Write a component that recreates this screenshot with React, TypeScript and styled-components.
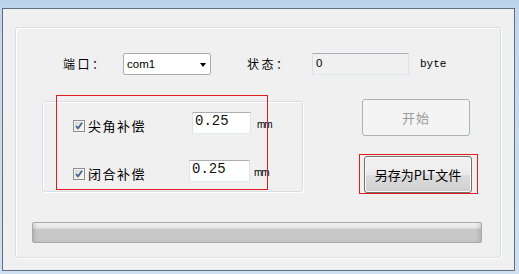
import styled, { createGlobalStyle } from "styled-components";

const Global = createGlobalStyle`
  html, body {
    margin: 0;
    padding: 0;
  }
  body {
    width: 519px;
    height: 274px;
    overflow: hidden;
    background: #c4d8ee;
    font-family: "Noto Sans CJK SC", "Liberation Sans", sans-serif;
  }
`;

const Frame = styled.div`
  width: 519px;
  height: 274px;
  box-sizing: border-box;
  padding: 8px 4px 3px 2px;
  background: linear-gradient(to bottom, #b9d1ea 0px, #c2d7ed 12px, #cfe0f2 100%);
`;

const Client = styled.div`
  height: 100%;
  box-sizing: border-box;
  border: 1px solid #5f6f81;
  background: #f0f0f0;
  padding: 18px 13px 12px 12px;
`;

const GroupBox = styled.div`
  height: 100%;
  box-sizing: border-box;
  border: 1px solid #d5dfe5;
  border-radius: 3px;
  box-shadow: inset 1px 1px 0 #ffffff, 1px 1px 0 #ffffff;
  padding-top: 25px;
  display: flex;
  flex-direction: column;
`;

const TopRow = styled.div`
  display: flex;
  align-items: center;
  height: 22px;
  margin-left: 47px;
`;

const Label = styled.span<{ $width: number }>`
  width: ${(p) => p.$width}px;
  font-size: 12px;
  letter-spacing: 2.5px;
  color: #000;
  line-height: 22px;
`;

const Combo = styled.div`
  width: 88px;
  height: 22px;
  box-sizing: border-box;
  border: 1px solid #abadb3;
  border-radius: 2px;
  background: #fff;
  display: flex;
  align-items: center;
  justify-content: space-between;
  padding: 0 4px 0 3px;
  margin-right: 36px;
  font-family: "Liberation Sans", sans-serif;
  font-size: 11.5px;
  color: #000;
`;

const Arrow = styled.span`
  width: 0;
  height: 0;
  border-left: 3.5px solid transparent;
  border-right: 3.5px solid transparent;
  border-top: 4px solid #000;
  margin-top: 1px;
`;

const StatusBox = styled.div`
  width: 97px;
  height: 22px;
  box-sizing: border-box;
  border: 1px solid #abadb3;
  border-left-color: #dbdfe6;
  border-right-color: #dbdfe6;
  border-bottom-color: #e3e9ef;
  background: #f0f0f0;
  padding: 2px 0 0 3px;
  font-family: "Liberation Sans", sans-serif;
  font-size: 11.5px;
  line-height: 14px;
  color: #000;
`;

const Unit = styled.span<{ $gap: number }>`
  margin-left: ${(p) => p.$gap}px;
  font-family: "Liberation Mono", monospace;
  font-size: 11px;
  color: #000;
`;

const MiddleRow = styled.div`
  display: flex;
  margin-top: 24px;
`;

const InnerGroup = styled.div`
  position: relative;
  width: 261px;
  height: 91px;
  box-sizing: border-box;
  margin: 2px 0 0 26px;
  border: 1px solid #d5dfe5;
  border-radius: 3px;
  box-shadow: inset 1px 1px 0 #ffffff, 1px 1px 0 #ffffff;
  padding: 10px 0 0 30px;
  display: flex;
  flex-direction: column;
  gap: 26px;
`;

const Marker = styled.div<{ $l: number; $t: number; $w: number; $h: number }>`
  position: absolute;
  left: ${(p) => p.$l}px;
  top: ${(p) => p.$t}px;
  width: ${(p) => p.$w}px;
  height: ${(p) => p.$h}px;
  box-sizing: border-box;
  border: 1px solid #e01c1c;
  pointer-events: none;
`;

const CheckRow = styled.div`
  display: flex;
  align-items: center;
  height: 22px;
`;

const CheckItem = styled.label<{ $width: number }>`
  width: ${(p) => p.$width}px;
  display: flex;
  align-items: center;
  gap: 3px;
  margin-top: 6px;
  font-size: 13px;
  letter-spacing: 1.5px;
  color: #000;
  line-height: 16px;
`;

const ValueBox = styled.div<{ $width: number }>`
  width: ${(p) => p.$width}px;
  height: 22px;
  box-sizing: border-box;
  border: 1px solid #abadb3;
  border-left-color: #e2e3ea;
  border-right-color: #e2e3ea;
  border-bottom-color: #e3e9ef;
  background: #fff;
  padding: 1px 0 0 2px;
  font-family: "Liberation Mono", monospace;
  font-size: 14px;
  line-height: 15px;
  color: #111;
`;

const Mm = styled.span<{ $gap: number }>`
  margin-left: ${(p) => p.$gap}px;
  margin-top: 3px;
  font-family: "Liberation Sans", sans-serif;
  font-size: 10px;
  letter-spacing: -1px;
  color: #000;
`;

const ButtonColumn = styled.div`
  display: flex;
  flex-direction: column;
  align-items: flex-start;
  gap: 20px;
  margin-left: 59px;
`;

const Highlight = styled.div`
  position: relative;
  margin-left: 2px;
`;

const Button = styled.button<{ $disabled?: boolean }>`
  width: 108px;
  height: 37px;
  box-sizing: border-box;
  border-radius: 3px;
  font-family: "Noto Sans CJK SC", "Liberation Sans", sans-serif;
  font-size: 13px;
  padding: 0;
  border: 1px solid ${(p) => (p.$disabled ? "#adb2b5" : "#707070")};
  color: ${(p) => (p.$disabled ? "#9a9a9a" : "#000")};
  letter-spacing: ${(p) => (p.$disabled ? "1px" : "0")};
  background: ${(p) =>
    p.$disabled
      ? "#f4f4f4"
      : "linear-gradient(to bottom, #f2f2f2 0%, #ebebeb 50%, #dddddd 51%, #cfcfcf 100%)"};
  box-shadow: ${(p) => (p.$disabled ? "none" : "inset 0 0 0 1px #fbfbfb")};
`;

const Progress = styled.div`
  width: 450px;
  height: 21px;
  box-sizing: border-box;
  margin: 29px 0 0 16px;
  border: 1px solid #a9a9a9;
  border-radius: 2px;
  background: linear-gradient(to bottom, #f2f2f2 0px, #e4e4e4 5px, #cacaca 6px, #c6c6c6 100%);
  box-shadow: inset 5px 0 4px -3px rgba(0, 0, 0, 0.12), inset -5px 0 4px -3px rgba(0, 0, 0, 0.12);
`;

const Check = () => (
  <svg width="12" height="12" viewBox="0 0 12 12">
    <defs>
      <linearGradient id="cb" x1="0" y1="0" x2="1" y2="1">
        <stop offset="0" stopColor="#d6d6d6" />
        <stop offset="1" stopColor="#f8f8f8" />
      </linearGradient>
    </defs>
    <rect x="0.5" y="0.5" width="11" height="11" fill="#f4f4f4" stroke="#8e8f8f" />
    <rect x="2" y="2" width="8" height="8" fill="url(#cb)" />
    <path d="M3 6 L5 8.5 L9 2.8" fill="none" stroke="#3d5c8c" strokeWidth="1.6" />
  </svg>
);

const App = () => {
  return (
    <>
      <Global />
      <Frame>
        <Client>
          <GroupBox>
            <TopRow>
              <Label $width={60}>端口：</Label>
              <Combo>
                <span>com1</span>
                <Arrow />
              </Combo>
              <Label $width={65}>状态：</Label>
              <StatusBox>0</StatusBox>
              <Unit $gap={11}>byte</Unit>
            </TopRow>
            <MiddleRow>
              <InnerGroup>
                <CheckRow>
                  <CheckItem $width={119}>
                    <Check />
                    尖角补偿
                  </CheckItem>
                  <ValueBox $width={59}>0.25</ValueBox>
                  <Mm $gap={6}>mm</Mm>
                </CheckRow>
                <CheckRow>
                  <CheckItem $width={116}>
                    <Check />
                    闭合补偿
                  </CheckItem>
                  <ValueBox $width={61}>0.25</ValueBox>
                  <Mm $gap={4}>mm</Mm>
                </CheckRow>
                <Marker $l={13} $t={-7} $w={212} $h={95} />
              </InnerGroup>
              <ButtonColumn>
                <Button $disabled disabled>
                  开始
                </Button>
                <Highlight>
                  <Button>另存为PLT文件</Button>
                  <Marker $l={-5} $t={-2} $w={119} $h={40} />
                </Highlight>
              </ButtonColumn>
            </MiddleRow>
            <Progress />
          </GroupBox>
        </Client>
      </Frame>
    </>
  );
};

export default App;
